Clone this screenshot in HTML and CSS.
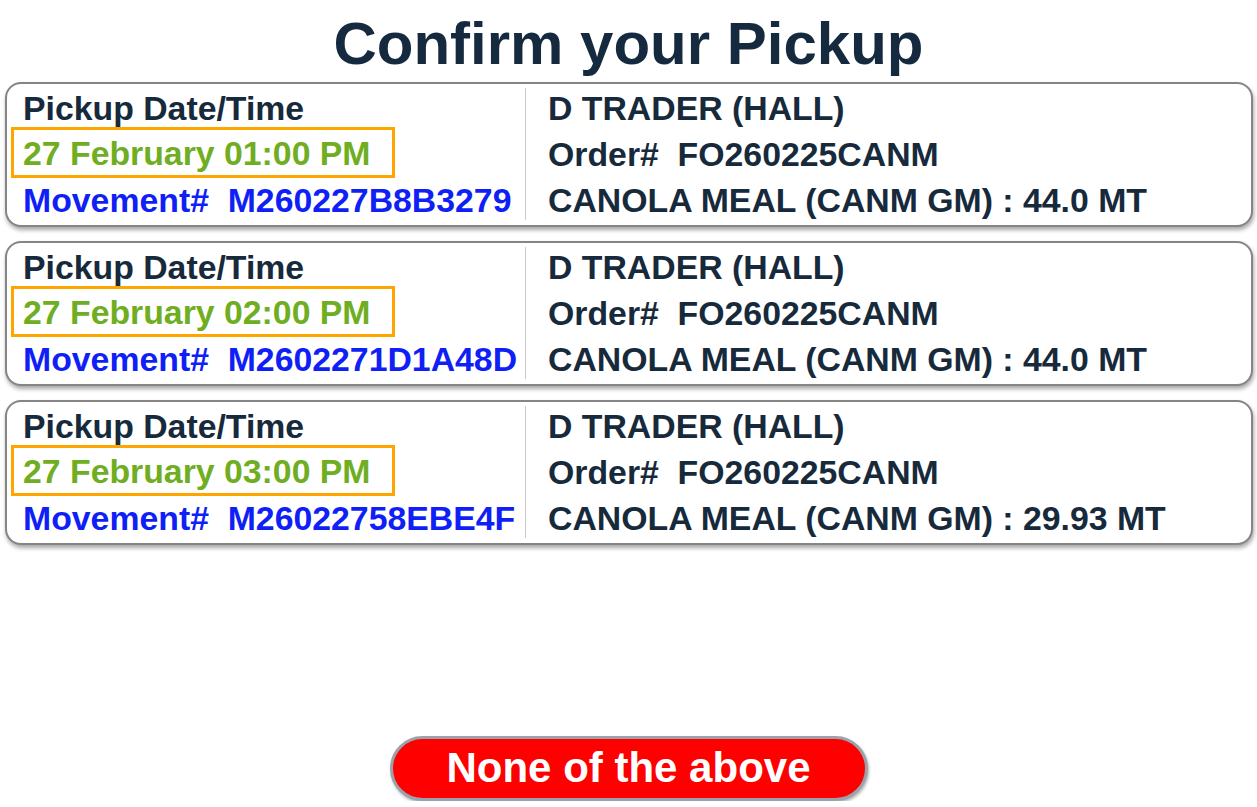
FILE: index.html
```html
<!DOCTYPE html>
<html>
<head>
<meta charset="utf-8">
<link rel="stylesheet" href="styles.css">
</head>
<body>
<div class="page">
  <h1 class="title">Confirm your Pickup</h1>
  <div class="list">
    <div class="card">
      <div class="col left">
        <div class="line label">Pickup Date/Time</div>
        <div class="date">27 February 01:00 PM</div>
        <div class="line move">Movement#&nbsp; M260227B8B3279</div>
      </div>
      <div class="col right">
        <div class="line">D TRADER (HALL)</div>
        <div class="line">Order#&nbsp; FO260225CANM</div>
        <div class="line">CANOLA MEAL (CANM GM) : 44.0 MT</div>
      </div>
    </div>
    <div class="card">
      <div class="col left">
        <div class="line label">Pickup Date/Time</div>
        <div class="date">27 February 02:00 PM</div>
        <div class="line move">Movement#&nbsp; M2602271D1A48D</div>
      </div>
      <div class="col right">
        <div class="line">D TRADER (HALL)</div>
        <div class="line">Order#&nbsp; FO260225CANM</div>
        <div class="line">CANOLA MEAL (CANM GM) : 44.0 MT</div>
      </div>
    </div>
    <div class="card">
      <div class="col left">
        <div class="line label">Pickup Date/Time</div>
        <div class="date">27 February 03:00 PM</div>
        <div class="line move">Movement#&nbsp; M26022758EBE4F</div>
      </div>
      <div class="col right">
        <div class="line">D TRADER (HALL)</div>
        <div class="line">Order#&nbsp; FO260225CANM</div>
        <div class="line">CANOLA MEAL (CANM GM) : 29.93 MT</div>
      </div>
    </div>
  </div>
  <div class="actions">
    <button class="none-btn">None of the above</button>
  </div>
</div>
</body>
</html>
```

FILE: styles.css
```css
html, body {
  margin: 0;
  padding: 0;
  background: #ffffff;
}

body {
  font-family: "Liberation Sans", Arial, sans-serif;
  font-weight: bold;
  color: #172a3c;
}

.page {
  width: 1257px;
}

.title {
  margin: 0 0 3px 0;
  padding-top: 9px;
  font-size: 60px;
  line-height: 70px;
  text-align: center;
  color: #152a3e;
  font-weight: bold;
}

.list {
  display: flex;
  flex-direction: column;
  gap: 14px;
  margin: 0 4px 0 5px;
}

.card {
  display: grid;
  grid-template-columns: 518px 1fr;
  border: 2px solid #858585;
  border-radius: 16px;
  padding: 1px 0 2px 0;
  box-shadow: 1px 3px 4px rgba(0, 0, 0, 0.35);
  background: #fff;
}

.col {
  display: flex;
  flex-direction: column;
}

.left {
  padding-left: 16px;
}

.right {
  border-left: 1px solid #c9c9c9;
  padding-left: 22px;
  margin: 3px 0 3px 0;
}

.right .line:first-child {
  margin-top: -3px;
}

.right .line:last-child {
  margin-bottom: -3px;
}

.line {
  font-size: 33.8px;
  line-height: 46px;
  white-space: nowrap;
}

.label {
  color: #172a3c;
}

.move {
  color: #0f1ff5;
}

.date {
  width: fit-content;
  margin: -4px 0 -1px -12px;
  border: 3px solid #ffa500;
  padding: 1px 21px 0 9px;
  font-size: 33.8px;
  line-height: 44px;
  color: #6fae22;
  white-space: nowrap;
}

.actions {
  display: flex;
  justify-content: center;
  margin-top: 191px;
}

.none-btn {
  width: 478px;
  height: 65px;
  border: 3px solid #9aa3ab;
  border-radius: 33px;
  background: #ff0000;
  color: #ffffff;
  font-family: "Liberation Sans", Arial, sans-serif;
  font-weight: bold;
  font-size: 42px;
  line-height: 1;
  padding: 0 0 2px 0;
  box-shadow: 1px 2px 3px rgba(0, 0, 0, 0.3);
  cursor: pointer;
}
```
